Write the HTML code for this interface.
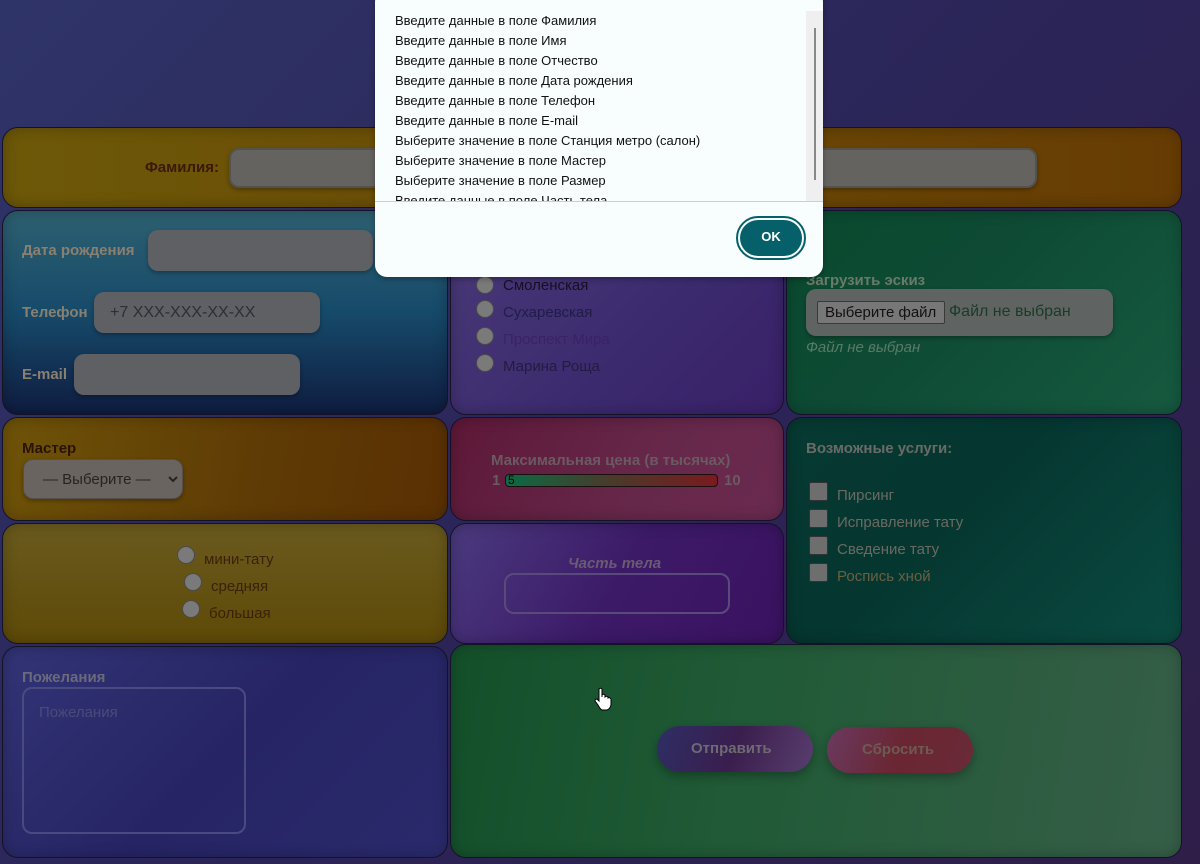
<!DOCTYPE html>
<html><head><meta charset="utf-8"><style>
*{box-sizing:border-box;margin:0;padding:0}
body{width:1200px;height:864px;overflow:hidden;position:relative;font-family:"Liberation Sans","DejaVu Sans",sans-serif;background:linear-gradient(135deg,#2f3468 0%,#2b2558 50%,#2e1e48 100%)}
.c{position:absolute;border:1px solid #151228;border-radius:16px;box-shadow:inset 0 0 14px rgba(0,0,0,.25)}
.a{position:absolute}
.lbl{font-weight:bold;font-size:15px}
.inp{position:absolute;background:#65635f;border-radius:10px;box-shadow:0 2px 4px rgba(0,0,0,.3)}
.rad{position:absolute;width:18px;height:18px;border-radius:50%;background:#7a7a7a;border:1px solid #4a4a4a}
.chk{position:absolute;width:19px;height:19px;background:#6e6e6e;border:1px solid #333;border-radius:2px}
.t{position:absolute;font-size:15px;white-space:nowrap}
</style></head><body>
<!-- row1 -->
<div class="c" style="left:2px;top:127px;width:1180px;height:81px;background:linear-gradient(90deg,#6d5808,#6a4a06 50%,#673c04)"></div>
<div class="t lbl" style="left:145px;top:159px;color:#3a1a08">Фамилия:</div>
<div class="inp" style="left:229px;top:148px;width:300px;height:40px;border:2px solid #55524e"></div>
<div class="inp" style="left:700px;top:148px;width:337px;height:40px;border:2px solid #55524e"></div>
<!-- blue cell -->
<div class="c" style="left:2px;top:210px;width:446px;height:205px;background:linear-gradient(180deg,#2d6070,#164a6a 50%,#0f1c40)"></div>
<div class="t lbl" style="left:22px;top:242px;color:#8a8070">Дата рождения</div>
<div class="inp" style="left:148px;top:230px;width:225px;height:41px;background:#5e6064"></div>
<div class="t lbl" style="left:22px;top:304px;color:#8a8070">Телефон</div>
<div class="inp" style="left:94px;top:292px;width:226px;height:41px;background:#5e6064"></div>
<div class="t" style="left:110px;top:304px;color:#2e2e34;font-size:16px">+7 XXX-XXX-XX-XX</div>
<div class="t lbl" style="left:22px;top:366px;color:#8a8070">E-mail</div>
<div class="inp" style="left:74px;top:354px;width:226px;height:41px;background:#5e6064"></div>
<!-- metro -->
<div class="c" style="left:450px;top:210px;width:334px;height:205px;background:linear-gradient(135deg,#4a3a78,#3b2a6e 60%,#3a2068)"></div>
<div class="rad" style="left:476px;top:276px"></div><div class="t" style="left:503px;top:277px;color:#141020;font-size:15px">Смоленская</div>
<div class="rad" style="left:476px;top:300px"></div><div class="t" style="left:503px;top:304px;color:#201c48;font-size:15px">Сухаревская</div>
<div class="rad" style="left:476px;top:327px"></div><div class="t" style="left:503px;top:331px;color:#3a2266;font-size:15px">Проспект Мира</div>
<div class="rad" style="left:476px;top:354px"></div><div class="t" style="left:503px;top:358px;color:#221c40;font-size:15px">Марина Роща</div>
<!-- upload -->
<div class="c" style="left:786px;top:210px;width:396px;height:205px;background:linear-gradient(135deg,#0a4a2e,#0e4a34 40%,#165a40)"></div>
<div class="t lbl" style="left:806px;top:272px;color:#6a7a6a">Загрузить эскиз</div>
<div class="inp" style="left:806px;top:289px;width:307px;height:47px;background:#5f6462"></div>
<div class="a" style="left:817px;top:301px;width:128px;height:23px;background:#777;border:1px solid #3a3a3a;border-radius:2px;font-size:15px;color:#111;padding-left:7px;line-height:21px;white-space:nowrap;overflow:hidden">Выберите файл</div>
<div class="t" style="left:949px;top:303px;color:#1a3a2a;font-size:16px">Файл не выбран</div>
<div class="t" style="left:806px;top:339px;color:#5a7a68;font-style:italic;font-size:15px">Файл не выбран</div>
<!-- master -->
<div class="c" style="left:2px;top:417px;width:446px;height:104px;background:linear-gradient(100deg,#6e5308,#5e3a05 60%,#5a3003)"></div>
<div class="t lbl" style="left:22px;top:440px;color:#2a1205">Мастер</div>
<div class="inp" style="left:23px;top:459px;width:160px;height:40px;background:#6a6460;border:1px solid #55504a"></div>
<div class="t" style="left:43px;top:471px;color:#2a2220;font-size:15px">— Выберите —</div>
<svg class="a" style="left:168px;top:475px" width="10" height="8" viewBox="0 0 10 8"><path d="M1 2 L5 6 L9 2" stroke="#2a2220" stroke-width="2" fill="none"/></svg>
<!-- size -->
<div class="c" style="left:2px;top:523px;width:446px;height:121px;background:linear-gradient(180deg,#6a5a1e,#5e4a08)"></div>
<div class="rad" style="left:177px;top:546px"></div><div class="t" style="left:204px;top:551px;color:#3a2208">мини-тату</div>
<div class="rad" style="left:184px;top:573px"></div><div class="t" style="left:211px;top:578px;color:#3a2208">средняя</div>
<div class="rad" style="left:182px;top:600px"></div><div class="t" style="left:209px;top:605px;color:#3a2208">большая</div>
<!-- price -->
<div class="c" style="left:450px;top:417px;width:334px;height:104px;background:linear-gradient(120deg,#5e1838,#66284a 60%,#6a2a50)"></div>
<div class="t lbl" style="left:491px;top:452px;color:#6a5a62">Максимальная цена (в тысячах)</div>
<div class="t lbl" style="left:492px;top:472px;color:#6a5a62">1</div>
<div class="a" style="left:505px;top:474px;width:213px;height:13px;border-radius:4px;background:linear-gradient(90deg,#0c6a44,#4a3a2a 50%,#7a1a20);border:1px solid #1a1010"></div>
<div class="t" style="left:508px;top:473px;font-size:12px;color:#000">5</div>
<div class="t lbl" style="left:724px;top:472px;color:#6a5a62">10</div>
<!-- body part -->
<div class="c" style="left:450px;top:523px;width:334px;height:121px;background:linear-gradient(120deg,#4a3a7e,#3c1a68 50%,#3a1260)"></div>
<div class="t lbl" style="left:568px;top:555px;color:#6a5a72;font-style:italic">Часть тела</div>
<div class="a" style="left:504px;top:573px;width:226px;height:41px;border:2px solid #5a4a7a;border-radius:10px"></div>
<!-- services -->
<div class="c" style="left:786px;top:417px;width:396px;height:227px;background:linear-gradient(135deg,#063a32,#053630 40%,#0a4a40)"></div>
<div class="t lbl" style="left:806px;top:440px;color:#6a6a66">Возможные услуги:</div>
<div class="chk" style="left:809px;top:482px"></div><div class="t" style="left:837px;top:487px;color:#6a6a62">Пирсинг</div>
<div class="chk" style="left:809px;top:509px"></div><div class="t" style="left:837px;top:514px;color:#6a6a62">Исправление тату</div>
<div class="chk" style="left:809px;top:536px"></div><div class="t" style="left:837px;top:541px;color:#6a6a62">Сведение тату</div>
<div class="chk" style="left:809px;top:563px"></div><div class="t" style="left:837px;top:568px;color:#6a6040">Роспись хной</div>
<!-- wishes -->
<div class="c" style="left:2px;top:646px;width:446px;height:212px;background:linear-gradient(135deg,#323476,#262464 50%,#2a2a6c)"></div>
<div class="t lbl" style="left:22px;top:669px;color:#6a6a7a">Пожелания</div>
<div class="a" style="left:22px;top:687px;width:224px;height:147px;border:2px solid #4a4a80;border-radius:10px"></div>
<div class="t" style="left:39px;top:704px;color:#4a4a7a;font-size:15px">Пожелания</div>
<!-- submit -->
<div class="c" style="left:450px;top:644px;width:732px;height:214px;background:linear-gradient(100deg,#13502a,#205a36 40%,#365e48)"></div>
<div class="a" style="left:657px;top:726px;width:156px;height:46px;border-radius:23px;background:linear-gradient(110deg,#2e2e64,#3a1e4e 50%,#583e6e);box-shadow:0 4px 10px rgba(0,0,0,.3)"></div>
<div class="t lbl" style="left:691px;top:740px;color:#6e6a72">Отправить</div>
<div class="a" style="left:827px;top:727px;width:146px;height:46px;border-radius:23px;background:linear-gradient(110deg,#6a3a60,#6a2632 50%,#6a2a38);box-shadow:0 4px 10px rgba(0,0,0,.3)"></div>
<div class="t lbl" style="left:862px;top:741px;color:#6e5a52">Сбросить</div>
<svg class="a" style="left:594px;top:687px" width="18" height="24" viewBox="0 0 18 24"><path d="M5 2 Q6.5 0.5 8 2 L8 10 L8 8 Q9.5 6.5 11 8 L11 10 Q12.5 8.5 14 10 L14 11 Q15.5 10 17 12 L17 18 Q16 22 13 23 L8 23 Q6 22 4 18 L1 14 Q1 12 3 12 L5 14 Z" fill="#fff" stroke="#000" stroke-width="1"/></svg>
<!-- modal -->
<div class="a" style="left:375px;top:-10px;width:448px;height:287px;background:#f8fefe;border-radius:12px;box-shadow:0 2px 6px rgba(0,0,0,.3)"></div>
<div class="a" style="left:375px;top:10px;width:431px;height:191px;overflow:hidden;font-family:'Liberation Sans',sans-serif;font-size:13px;color:#111;line-height:20px;padding:1px 0 0 20px">
Введите данные в поле Фамилия<br>Введите данные в поле Имя<br>Введите данные в поле Отчество<br>Введите данные в поле Дата рождения<br>Введите данные в поле Телефон<br>Введите данные в поле E-mail<br>Выберите значение в поле Станция метро (салон)<br>Выберите значение в поле Мастер<br>Выберите значение в поле Размер<br>Введите данные в поле Часть тела</div>
<div class="a" style="left:806px;top:11px;width:17px;height:190px;background:#efefef"></div>
<div class="a" style="left:814px;top:28px;width:2px;height:152px;background:#888"></div>
<div class="a" style="left:375px;top:201px;width:448px;height:1px;background:#8ee8f4"></div>
<div class="a" style="left:736px;top:216px;width:70px;height:44px;border-radius:22px;border:2px solid #06606a;padding:2px"><div style="width:100%;height:100%;border-radius:20px;background:#06606a;color:#fff;font-weight:bold;font-size:13px;text-align:center;line-height:34px">OK</div></div>
</body></html>
